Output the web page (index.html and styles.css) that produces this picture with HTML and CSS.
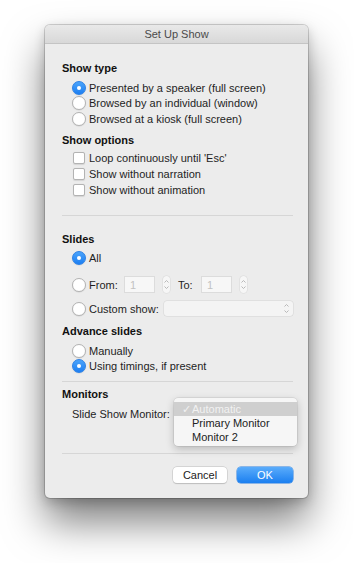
FILE: index.html
```html
<!DOCTYPE html>
<html lang="en">
<head>
    <meta charset="UTF-8">
    <title>Set Up Show</title>
    <link rel="stylesheet" href="styles.css">
</head>
<body>
    <div class="window">
        <div class="titlebar">Set Up Show</div>
        <div class="content">
            <div class="head">Show type</div>
            <div class="group g-type">
                <div class="opt"><span class="radio on"></span>Presented by a speaker (full screen)</div>
                <div class="opt"><span class="radio"></span>Browsed by an individual (window)</div>
                <div class="opt"><span class="radio"></span>Browsed at a kiosk (full screen)</div>
            </div>

            <div class="head h-options">Show options</div>
            <div class="group g-options">
                <div class="opt check-row"><span class="check"></span>Loop continuously until 'Esc'</div>
                <div class="opt check-row"><span class="check"></span>Show without narration</div>
                <div class="opt check-row"><span class="check"></span>Show without animation</div>
            </div>

            <div class="sep sep-1"></div>

            <div class="head h-slides">Slides</div>
            <div class="opt row-all"><span class="radio on"></span>All</div>
            <div class="opt row-from">
                <span class="radio"></span>
                <span class="lbl lbl-from">From:</span>
                <span class="num">1</span>
                <span class="stepper"><svg width="7" height="17" viewBox="0 0 7 17"><path d="M1.5 6.5 L3.5 4.5 L5.5 6.5 M1.5 10.5 L3.5 12.5 L5.5 10.5" fill="none" stroke="#b8b8b8" stroke-width="1"/></svg></span>
                <span class="lbl lbl-to">To:</span>
                <span class="num">1</span>
                <span class="stepper"><svg width="7" height="17" viewBox="0 0 7 17"><path d="M1.5 6.5 L3.5 4.5 L5.5 6.5 M1.5 10.5 L3.5 12.5 L5.5 10.5" fill="none" stroke="#b8b8b8" stroke-width="1"/></svg></span>
            </div>
            <div class="opt row-custom">
                <span class="radio"></span>
                <span class="lbl lbl-custom">Custom show:</span>
                <span class="popup"><svg width="7" height="15" viewBox="0 0 7 15"><path d="M1.5 5.5 L3.5 3.5 L5.5 5.5 M1.5 9.5 L3.5 11.5 L5.5 9.5" fill="none" stroke="#b8b8b8" stroke-width="1"/></svg></span>
            </div>

            <div class="head h-advance">Advance slides</div>
            <div class="group g-advance">
                <div class="opt"><span class="radio"></span>Manually</div>
                <div class="opt"><span class="radio on"></span>Using timings, if present</div>
            </div>

            <div class="sep sep-2"></div>

            <div class="head h-monitors">Monitors</div>
            <div class="monitor-row">
                <span class="monitor-lbl">Slide Show Monitor:</span>
                <div class="menu">
                    <div class="menu-item selected"><span class="tick">&#10003;</span>Automatic</div>
                    <div class="menu-item">Primary Monitor</div>
                    <div class="menu-item">Monitor 2</div>
                </div>
            </div>

            <div class="sep sep-3"></div>

            <div class="buttons">
                <button class="btn">Cancel</button>
                <button class="btn btn-ok">OK</button>
            </div>
        </div>
    </div>
</body>
</html>
```

FILE: styles.css
```css
html, body {
    height: 100%;
}
body {
    margin: 0;
    min-height: 563px;
    background: #fff;
    font-family: "Liberation Sans", Arial, sans-serif;
    font-size: 11px;
    color: #1e1e1e;
}
.window {
    margin: 25px 0 0 45px;
    width: 263px;
    background: #ececec;
    border-radius: 5px;
    box-shadow: 0 0 0 1px rgba(0, 0, 0, 0.16), 0 24px 40px rgba(0, 0, 0, 0.5), 0 4px 12px rgba(0, 0, 0, 0.2);
}
.titlebar {
    height: 18px;
    line-height: 19px;
    text-align: center;
    color: #4a4a4a;
    font-size: 11px;
    background: linear-gradient(#e9e9e9, #d8d8d8);
    border-bottom: 1px solid #c4c4c4;
    border-radius: 5px 5px 0 0;
}
.content {
    padding: 16px 15px 15px 17px;
}
.head {
    height: 16px;
    line-height: 16px;
    font-weight: bold;
    color: #111;
}
.opt {
    display: flex;
    align-items: center;
    height: 15.5px;
    padding-left: 10px;
    white-space: nowrap;
}
.radio {
    width: 12px;
    height: 12px;
    margin-right: 3px;
    border-radius: 50%;
    background: #fff;
    border: 0.5px solid #b3b3b3;
    box-shadow: 0 0.5px 1px rgba(0, 0, 0, 0.12);
    flex: none;
    position: relative;
}
.radio.on {
    background: linear-gradient(#4ba4fb, #1d7ff2);
    border-color: #2a80e6;
}
.radio.on::after {
    content: "";
    position: absolute;
    left: 4px;
    top: 4px;
    width: 4px;
    height: 4px;
    border-radius: 50%;
    background: #fff;
}
.check {
    width: 10px;
    height: 10px;
    margin: 0 4px 0 1px;
    border-radius: 2px;
    background: #fff;
    border: 0.5px solid #b3b3b3;
    box-shadow: 0 0.5px 1px rgba(0, 0, 0, 0.1);
    flex: none;
}
.g-type {
    margin-top: 4px;
}
.h-options {
    margin-top: 5.5px;
}
.g-options {
    margin-top: 2px;
}
.check-row {
    height: 16px;
}
.sep {
    height: 1px;
    background: #d6d6d6;
}
.sep-1 {
    margin-top: 17px;
}
.h-slides {
    margin-top: 15px;
}
.row-all {
    margin-top: 3px;
    height: 16px;
}
.row-from {
    margin-top: 9.5px;
    height: 18px;
}
.row-custom {
    margin-top: 6.5px;
    height: 17px;
}
.lbl-from {
    width: 35px;
}
.lbl-to {
    width: 23px;
    margin-left: 8px;
}
.lbl-custom {
    width: 75px;
}
.num {
    width: 31px;
    height: 17px;
    line-height: 17px;
    padding-left: 5px;
    box-sizing: border-box;
    background: #f7f7f7;
    border: 1px solid #dcdcdc;
    color: #c2c2c2;
}
.stepper {
    width: 7px;
    height: 17px;
    margin-left: 8px;
    border-radius: 4px;
    background: #f6f6f6;
    box-shadow: 0 0 0 0.5px #d8d8d8;
    display: flex;
}
.popup {
    flex: 1;
    height: 15px;
    border-radius: 3px;
    background: #f4f4f4;
    box-shadow: 0 0 0 0.5px #d4d4d4;
    display: flex;
    justify-content: flex-end;
    padding-right: 3px;
}
.h-advance {
    margin-top: 6px;
}
.g-advance {
    margin-top: 4px;
}
.sep-2 {
    margin-top: 6.5px;
}
.h-monitors {
    margin-top: 4px;
}
.monitor-row {
    margin-top: 4px;
    height: 16px;
    line-height: 16px;
    padding-left: 10px;
    position: relative;
}
.menu {
    position: absolute;
    left: 112px;
    top: -8px;
    width: 123px;
    height: 48px;
    padding-top: 4px;
    box-sizing: border-box;
    background: #f6f6f6;
    border-radius: 4px;
    box-shadow: 0 0 0 0.5px rgba(0, 0, 0, 0.12), 0 3px 8px rgba(0, 0, 0, 0.22);
}
.menu-item {
    height: 14px;
    line-height: 14px;
    padding-left: 18px;
    color: #222;
}
.menu-item.selected {
    background: #cfcfcf;
    color: #f2f2f2;
    padding-left: 8px;
}
.tick {
    display: inline-block;
    width: 10px;
}
.sep-3 {
    margin-top: 31px;
}
.buttons {
    margin-top: 13px;
    display: flex;
    justify-content: flex-end;
    gap: 10px;
}
.btn {
    font-family: "Liberation Sans", Arial, sans-serif;
    font-size: 11px;
    height: 16px;
    width: 54px;
    padding: 0;
    border: none;
    border-radius: 4px;
    background: #fff;
    color: #222;
    box-shadow: 0 0 0 0.5px #c2c2c2, 0 0.5px 1px rgba(0, 0, 0, 0.2);
}
.btn-ok {
    width: 56px;
    color: #fff;
    background: linear-gradient(#5aacfb, #1b7ff0);
    box-shadow: 0 0 0 0.5px #2a7fe0;
}
```
